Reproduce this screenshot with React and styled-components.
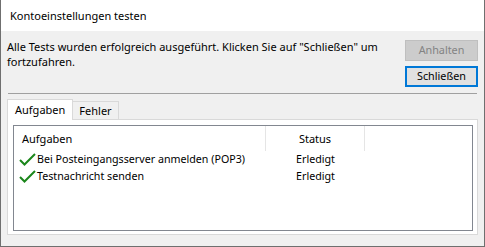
import styled, { createGlobalStyle } from 'styled-components';

const GlobalStyle = createGlobalStyle`
  html, body {
    margin: 0;
    padding: 0;
    background: #ffffff;
  }
  * {
    box-sizing: border-box;
  }
`;

const Window = styled.div`
  width: 485px;
  height: 247px;
  display: flex;
  flex-direction: column;
  border: 1px solid #6f6f6f;
  border-top: none;
  font-family: "Noto Sans", "Open Sans", sans-serif;
  font-size: 11px;
  color: #000;
  overflow: hidden;
`;

const TitleBar = styled.div`
  height: 31px;
  flex: none;
  background: #ffffff;
  padding: 6px 0 0 9px;
  line-height: 20px;
`;

const Body = styled.div`
  flex: 1;
  display: flex;
  flex-direction: column;
  background: #f0f0f0;
  padding: 9px 6px 11px 6px;
`;

const TopRow = styled.div`
  display: flex;
  justify-content: space-between;
  align-items: flex-start;
`;

const Message = styled.div`
  width: 390px;
  line-height: 15px;
  margin-top: -1.5px;
`;

const ButtonColumn = styled.div`
  display: flex;
  flex-direction: column;
  gap: 5px;
`;

const Button = styled.button`
  width: 73px;
  height: 21px;
  padding: 0;
  font: inherit;
  font-size: 10.8px;
  background: ${p => (p.disabled ? '#cccccc' : '#e1e1e1')};
  color: ${p => (p.disabled ? '#838383' : '#000')};
  border: ${p => (p.$focused ? '2px solid #0078d7' : '1px solid ' + (p.disabled ? '#bfbfbf' : '#adadad'))};
  line-height: 1;
`;

const Separator = styled.div`
  height: 1px;
  background: #a0a0a0;
  margin: 6px 1px 0 1px;
`;

const TabStrip = styled.div`
  display: flex;
  align-items: flex-end;
  margin-top: 6px;
  height: 20px;
  position: relative;
  z-index: 1;
`;

const Tab = styled.div`
  height: ${p => (p.$active ? '21px' : '19px')};
  padding: 0 ${p => (p.$active ? '7px' : '6px')};
  line-height: ${p => (p.$active ? '19px' : '17px')};
  background: ${p => (p.$active ? '#ffffff' : '#f0f0f0')};
  border: 1px solid #d9d9d9;
  border-bottom: ${p => (p.$active ? 'none' : '1px solid #d9d9d9')};
  margin-left: ${p => (p.$active ? '0' : '-1px')};
`;

const TabPage = styled.div`
  flex: 1;
  background: #ffffff;
  border: 1px solid #d9d9d9;
  margin-top: -1px;
  padding: 5px 4px 3px 5px;
  display: flex;
`;

const ListBox = styled.div`
  flex: 1;
  border: 1px solid #828790;
  background: #ffffff;
`;

const Grid = styled.div`
  display: grid;
  grid-template-columns: 252px 99px 1fr;
`;

const HeaderCell = styled.div`
  height: 25px;
  line-height: 25px;
  padding-left: ${p => (p.$center ? '0' : '8px')};
  text-align: ${p => (p.$center ? 'center' : 'left')};
  border-right: ${p => (p.$last ? 'none' : '1px solid #e5e5e5')};
`;

const Cell = styled.div`
  height: 17px;
  line-height: 17px;
  font-size: 10.7px;
  display: flex;
  align-items: center;
  justify-content: ${p => (p.$center ? 'center' : 'flex-start')};
  padding-left: ${p => (p.$center ? '0' : '5px')};
  white-space: nowrap;
`;

const Check = styled.svg`
  width: 17px;
  height: 13px;
  margin-right: 1px;
  flex: none;
`;

const CheckIcon = () => (
  <Check viewBox="0 0 17 13">
    <path d="M1 7 L5.5 11.5 L16 1" fill="none" stroke="#1b861b" strokeWidth="2" />
  </Check>
);

const rows = [
  { task: 'Bei Posteingangsserver anmelden (POP3)', status: 'Erledigt' },
  { task: 'Testnachricht senden', status: 'Erledigt' },
];

const App = () => (
  <>
    <GlobalStyle />
    <Window>
      <TitleBar>Kontoeinstellungen testen</TitleBar>
      <Body>
        <TopRow>
          <Message>
            Alle Tests wurden erfolgreich ausgeführt. Klicken Sie auf "Schließen" um fortzufahren.
          </Message>
          <ButtonColumn>
            <Button disabled>Anhalten</Button>
            <Button $focused>Schließen</Button>
          </ButtonColumn>
        </TopRow>
        <Separator />
        <TabStrip>
          <Tab $active>Aufgaben</Tab>
          <Tab>Fehler</Tab>
        </TabStrip>
        <TabPage>
          <ListBox>
            <Grid>
              <HeaderCell>Aufgaben</HeaderCell>
              <HeaderCell $center>Status</HeaderCell>
              <HeaderCell $last />
              {rows.map(r => (
                <>
                  <Cell key={r.task}>
                    <CheckIcon />
                    {r.task}
                  </Cell>
                  <Cell $center>{r.status}</Cell>
                  <Cell />
                </>
              ))}
            </Grid>
          </ListBox>
        </TabPage>
      </Body>
    </Window>
  </>
);

export default App;
